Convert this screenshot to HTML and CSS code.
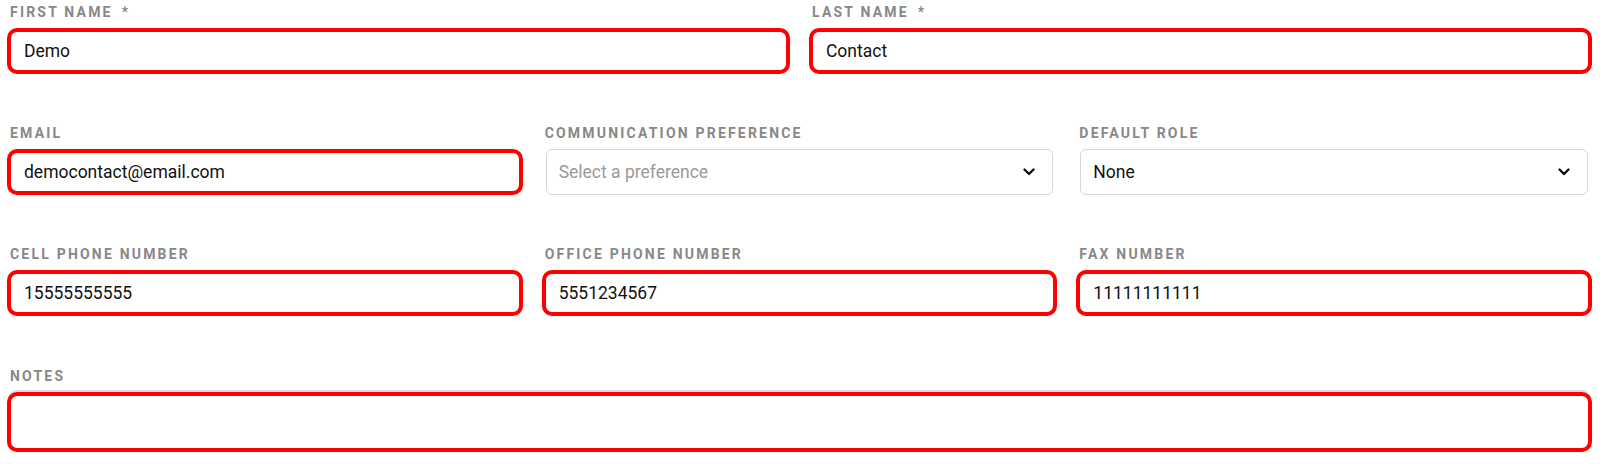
FILE: index.html
```html
<!DOCTYPE html>
<html lang="en">
<head>
<meta charset="utf-8">
<title>Contact form</title>
<link rel="stylesheet" href="styles.css">
</head>
<body>
<form class="form">
  <div class="field span3">
    <label class="label">First Name<span class="req">*</span></label>
    <div class="input flag">Demo</div>
  </div>
  <div class="field span3">
    <label class="label">Last Name<span class="req">*</span></label>
    <div class="input flag">Contact</div>
  </div>

  <div class="field span2">
    <label class="label">Email</label>
    <div class="input flag">democontact@email.com</div>
  </div>
  <div class="field span2">
    <label class="label">Communication Preference</label>
    <div class="input select placeholder">
      <span>Select a preference</span>
      <svg class="chev" width="12" height="8" viewBox="0 0 12 8"><path d="M1.5 1.5 L6 6 L10.5 1.5" fill="none" stroke="#111" stroke-width="2.4" stroke-linecap="round" stroke-linejoin="round"/></svg>
    </div>
  </div>
  <div class="field span2">
    <label class="label">Default Role</label>
    <div class="input select">
      <span>None</span>
      <svg class="chev" width="12" height="8" viewBox="0 0 12 8"><path d="M1.5 1.5 L6 6 L10.5 1.5" fill="none" stroke="#111" stroke-width="2.4" stroke-linecap="round" stroke-linejoin="round"/></svg>
    </div>
  </div>

  <div class="field span2">
    <label class="label">Cell Phone Number</label>
    <div class="input flag">15555555555</div>
  </div>
  <div class="field span2">
    <label class="label">Office Phone Number</label>
    <div class="input flag">5551234567</div>
  </div>
  <div class="field span2">
    <label class="label">Fax Number</label>
    <div class="input flag">11111111111</div>
  </div>

  <div class="field span6 notes">
    <label class="label">Notes</label>
    <div class="input flag textarea"></div>
  </div>
</form>
</body>
</html>
```
FILE: styles.css
```css
* { box-sizing: border-box; }
html, body {
  margin: 0;
  padding: 0;
  background: #fff;
}
body {
  font-family: Roboto, "Noto Sans", "Liberation Sans", sans-serif;
  color: #111;
}
.form {
  display: grid;
  grid-template-columns: repeat(6, 1fr);
  column-gap: 27px;
  row-gap: 51px;
  padding: 4px 12px 0 11px;
}
.span2 { grid-column: span 2; }
.span3 { grid-column: span 3; }
.span6 { grid-column: span 6; }
.field {
  display: flex;
  flex-direction: column;
  min-width: 0;
}
.notes { margin-top: 1px; }
.label {
  font-size: 14px;
  line-height: 16px;
  font-weight: 700;
  letter-spacing: 2.2px;
  text-transform: uppercase;
  color: #888;
  margin: 0 0 8px -1px;
}
.req { margin-left: 9px; }
.input {
  height: 46px;
  display: flex;
  align-items: center;
  padding: 0 13px;
  font-size: 17.5px;
  color: #111;
  background: #fff;
  border: 1px solid #d6d6d6;
  border-radius: 6px;
}
.input.flag {
  margin: 0 -4px;
  padding: 0 13px;
  border: 4px solid #ff0000;
  border-radius: 10px;
}
.select {
  justify-content: space-between;
  padding: 0 17px 0 12px;
}
.select.placeholder { color: #9a9a9a; }
.chev { flex: none; }
.textarea {
  height: 60px;
  margin-top: 4px;
  box-shadow: 0 -3px 0 -1px #dcdcdc;
}
```
